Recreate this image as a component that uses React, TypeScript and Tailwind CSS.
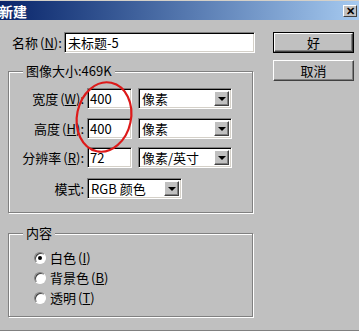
import React from 'react';

const FONT = { fontFamily: '"Noto Sans CJK SC", "Liberation Sans", sans-serif' };

const sunken =
  'bg-white border border-t-[#808080] border-l-[#808080] border-r-white border-b-white shadow-[inset_1px_1px_0_#000,inset_-1px_-1px_0_#d4d0c8]';

function Key({ k }: { k: string }) {
  return (
    <span className="ml-[2px]">
      (<span className="underline">{k}</span>)
    </span>
  );
}

function Select({ value, width }: { value: string; width: string }) {
  return (
    <div className={`${sunken} ${width} h-[21px] flex items-center justify-between pl-[3px] pr-[2px]`}>
      <span className="text-[13px] leading-none text-black">{value}</span>
      <div className="w-[15px] h-[15px] bg-[#c0c0c0] border border-t-white border-l-white border-r-[#404040] border-b-[#404040] shadow-[inset_-1px_-1px_0_#808080] flex items-center justify-center">
        <div className="w-0 h-0 border-l-[4px] border-r-[4px] border-t-[4px] border-l-transparent border-r-transparent border-t-black" />
      </div>
    </div>
  );
}

function Group({ title, className, children }: { title: string; className: string; children: React.ReactNode }) {
  return (
    <div className={`relative w-[245px] border border-[#808080] shadow-[inset_1px_1px_0_#fff,1px_1px_0_#fff] ${className}`}>
      <span className="absolute -top-[9px] left-[14px] bg-[#c0c0c0] px-[3px] text-[13px] leading-[16px]">
        {title}
      </span>
      {children}
    </div>
  );
}

function Radio({ checked, label, k }: { checked?: boolean; label: string; k: string }) {
  return (
    <div className="flex items-center h-[20px]">
      <div className="w-[12px] h-[12px] rounded-full bg-white border border-t-[#808080] border-l-[#808080] border-r-white border-b-white shadow-[inset_1px_1px_0_#404040] flex items-center justify-center">
        {checked && <div className="w-[4px] h-[4px] rounded-full bg-black" />}
      </div>
      <span className="ml-[4px] text-[13px]">
        {label}
        <Key k={k} />
      </span>
    </div>
  );
}

function Button({ label, isDefault }: { label: string; isDefault?: boolean }) {
  return (
    <div className={`w-[81px] h-[21px] ${isDefault ? 'border border-black' : ''}`}>
      <div className="w-full h-full border border-t-white border-l-white border-r-[#404040] border-b-[#404040] shadow-[inset_-1px_-1px_0_#808080] flex items-center justify-center text-[13px] leading-none">
        {label}
      </div>
    </div>
  );
}

export default function App() {
  return (
    <div
      className="relative w-[359px] h-[331px] bg-[#c0c0c0] overflow-hidden text-black border-b border-[#808080]"
      style={FONT}
    >
      {/* title bar */}
      <div className="border-t border-[#d4d0c8] h-[20px] bg-gradient-to-r from-[#0a246a] to-[#a6caf0] flex items-center justify-between pr-[2px]">
        <span className="text-white text-[14px] font-bold leading-none -ml-[1px]">新建</span>
        <div className="w-[14px] h-[12px] bg-[#c0c0c0] border border-t-white border-l-white border-r-[#404040] border-b-[#404040] flex items-center justify-center text-[11px] font-bold leading-none">
          ✕
        </div>
      </div>

      <div className="flex pt-[12px]">
        {/* left column */}
        <div className="pl-[8px]">
          <div className="flex items-center h-[21px]">
            <span className="w-[56px] pl-[4px] text-[13px] whitespace-nowrap">
              名称<Key k="N" />:
            </span>
            <div className={`${sunken} w-[191px] h-[21px] flex items-center pl-[3px] text-[13px]`}>未标题-5</div>
          </div>

          <Group title="图像大小:469K" className="mt-[18px] h-[142px] pt-[16px]">
            {[
              { label: '宽度', k: 'W', val: '400', unit: '像素', mt: '' },
              { label: '高度', k: 'H', val: '400', unit: '像素', mt: 'mt-[9px]' },
              { label: '分辨率', k: 'R', val: '72', unit: '像素/英寸', mt: 'mt-[8px]' },
            ].map((r) => (
              <div key={r.label} className={`flex items-center ${r.mt}`}>
                <span className="w-[75px] text-right text-[13px] whitespace-nowrap">
                  {r.label}
                  <Key k={r.k} />:
                </span>
                <div className={`${sunken} ml-[3px] w-[45px] h-[21px] flex items-center pl-[2px] text-[13px]`}>
                  {r.val}
                </div>
                <div className="ml-[6px]">
                  <Select value={r.unit} width="w-[94px]" />
                </div>
              </div>
            ))}
            <div className="flex items-center mt-[10px]">
              <span className="w-[75px] text-right text-[13px]">模式:</span>
              <div className="ml-[3px]">
                <Select value="RGB 颜色" width="w-[95px]" />
              </div>
            </div>
          </Group>

          <Group title="内容" className="mt-[20px] h-[84px] pt-[14px] pl-[25px]">
            <Radio checked label="白色" k="I" />
            <Radio label="背景色" k="B" />
            <Radio label="透明" k="T" />
          </Group>
        </div>

        {/* buttons */}
        <div className="ml-[18px] flex flex-col gap-[7px]">
          <Button label="好" isDefault />
          <Button label="取消" />
        </div>
      </div>

      {/* red annotation */}
      <svg className="absolute left-0 top-0 pointer-events-none" width="359" height="331">
        <ellipse
          cx="104"
          cy="117"
          rx="27"
          ry="35"
          fill="none"
          stroke="#dd1a1a"
          strokeWidth="2.2"
          transform="rotate(12 104 117)"
        />
      </svg>
    </div>
  );
}
